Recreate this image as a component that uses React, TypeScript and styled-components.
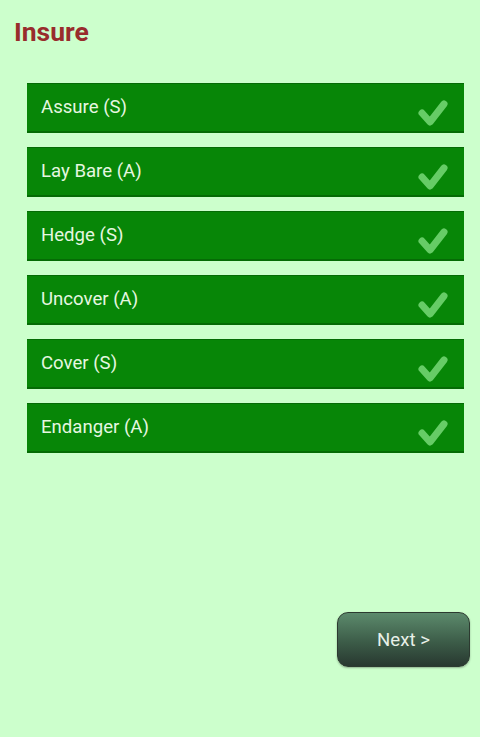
import React from "react";
import styled, { createGlobalStyle } from "styled-components";

const Global = createGlobalStyle`
  html, body { margin: 0; padding: 0; background: #ccffcc; }
  body { font-family: Roboto, "Noto Sans", sans-serif; }
`;

const Page = styled.div`
  width: 480px;
  height: 737px;
  box-sizing: border-box;
  display: flex;
  flex-direction: column;
  background: #ccffcc;
`;

const Title = styled.h1`
  margin: 17px 0 0 14px;
  font-size: 26.5px;
  line-height: 30px;
  font-weight: 700;
  color: #982c2c;
`;

const List = styled.div`
  display: flex;
  flex-direction: column;
  gap: 14px;
  margin: 36px 16px 0 27px;
`;

const Row = styled.div`
  height: 50px;
  box-sizing: border-box;
  background: #078607;
  border-top: 1px solid #056b05;
  border-bottom: 2px solid #056b05;
  display: flex;
  align-items: center;
  justify-content: space-between;
  padding: 0 15px 0 14px;
`;

const Label = styled.span`
  color: #e6f7e0;
  font-size: 18.6px;
  margin-top: -1px;
`;

const Check = styled.svg`
  width: 32px;
  height: 32px;
  margin-top: 8px;
`;

const Footer = styled.div`
  flex: 1;
  display: flex;
  justify-content: flex-end;
  align-items: flex-end;
  padding: 0 10px 70px 0;
`;

const NextButton = styled.button`
  width: 133px;
  height: 55px;
  border-radius: 11px;
  border: 1px solid #2c3a30;
  background: linear-gradient(#5c8a6c, #3c5c48 55%, #283830);
  color: #e8f0e8;
  font-family: Roboto, sans-serif;
  font-size: 18.6px;
  padding: 0;
  box-shadow: 0 1px 2px rgba(0, 0, 0, 0.3);
`;

const items = [
  "Assure (S)",
  "Lay Bare (A)",
  "Hedge (S)",
  "Uncover (A)",
  "Cover (S)",
  "Endanger (A)",
];

const CheckIcon = () => (
  <Check viewBox="0 0 32 32">
    <path
      d="M5 17 L13 26 L27 8"
      fill="none"
      stroke="#66cc66"
      strokeWidth="7"
      strokeLinecap="round"
      strokeLinejoin="round"
    />
  </Check>
);

export default function App() {
  return (
    <Page>
      <Global />
      <Title>Insure</Title>
      <List>
        {items.map((t) => (
          <Row key={t}>
            <Label>{t}</Label>
            <CheckIcon />
          </Row>
        ))}
      </List>
      <Footer>
        <NextButton>Next &gt;</NextButton>
      </Footer>
    </Page>
  );
}
